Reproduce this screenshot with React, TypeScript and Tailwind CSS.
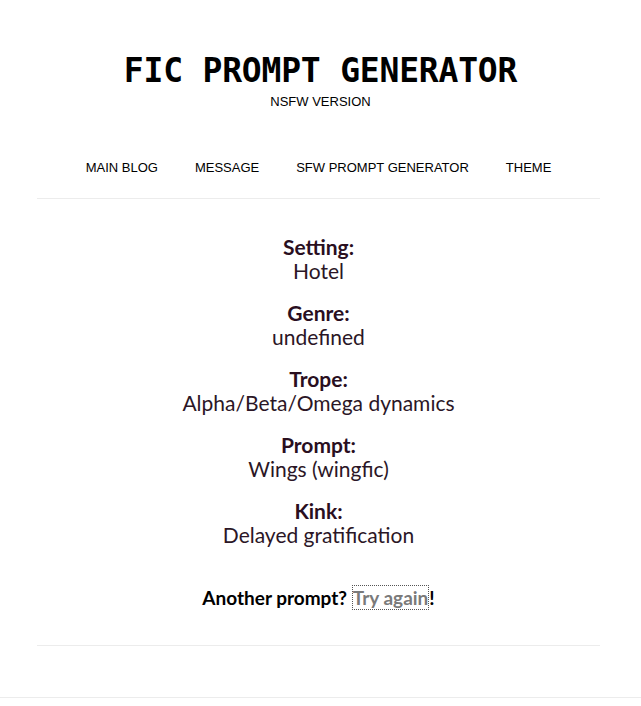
import type { FC } from 'react';

const items = [
  { label: 'Setting:', value: 'Hotel' },
  { label: 'Genre:', value: 'undefined' },
  { label: 'Trope:', value: 'Alpha/Beta/Omega dynamics' },
  { label: 'Prompt:', value: 'Wings (wingfic)' },
  { label: 'Kink:', value: 'Delayed gratification' },
];

const App: FC = () => {
  return (
    <div className="min-h-screen bg-white">
      {/* Header */}
      <div className="flex flex-col items-center pt-[52px]">
        <h1 className="font-['DejaVu_Sans_Mono',monospace] text-[33px] font-bold leading-[38px] tracking-[-0.2px] text-black">
          FIC PROMPT GENERATOR
        </h1>
        <p className="font-['Liberation_Sans',Arial,sans-serif] text-[13px] leading-[16px] text-black mt-[4px]">
          NSFW VERSION
        </p>
      </div>

      {/* Nav */}
      <div className="ml-[37px] mr-[41px] mt-[50px] border-b border-[#ececec] pb-[22px]">
        <div className="flex justify-center gap-[37px] font-['Liberation_Sans',Arial,sans-serif] text-[13px] leading-[16px] text-black">
          <span>MAIN BLOG</span>
          <span>MESSAGE</span>
          <span>SFW PROMPT GENERATOR</span>
          <span>THEME</span>
        </div>
      </div>

      {/* Prompt */}
      <div className="ml-[37px] mr-[41px] border-b border-[#ececec] pt-[36px] pb-[35px] font-['Lato','Open_Sans',sans-serif] text-[#2b1626]">
        <div className="flex flex-col items-center gap-[18px]">
          {items.map((it) => (
            <div key={it.label} className="flex flex-col items-center text-[21px] leading-[24px]">
              <span className="font-bold text-[#2a0f1f]">{it.label}</span>
              <span>{it.value}</span>
            </div>
          ))}
        </div>
        <p className="mt-[39px] text-center text-[19px] font-bold leading-[24px] text-black">
          Another prompt?{' '}
          <span className="border border-dotted border-[#555] text-[#7a7a7a]">Try again</span>!
        </p>
      </div>

      <div className="mt-[51px] border-b border-[#ececec]" />
    </div>
  );
};

export default App;
